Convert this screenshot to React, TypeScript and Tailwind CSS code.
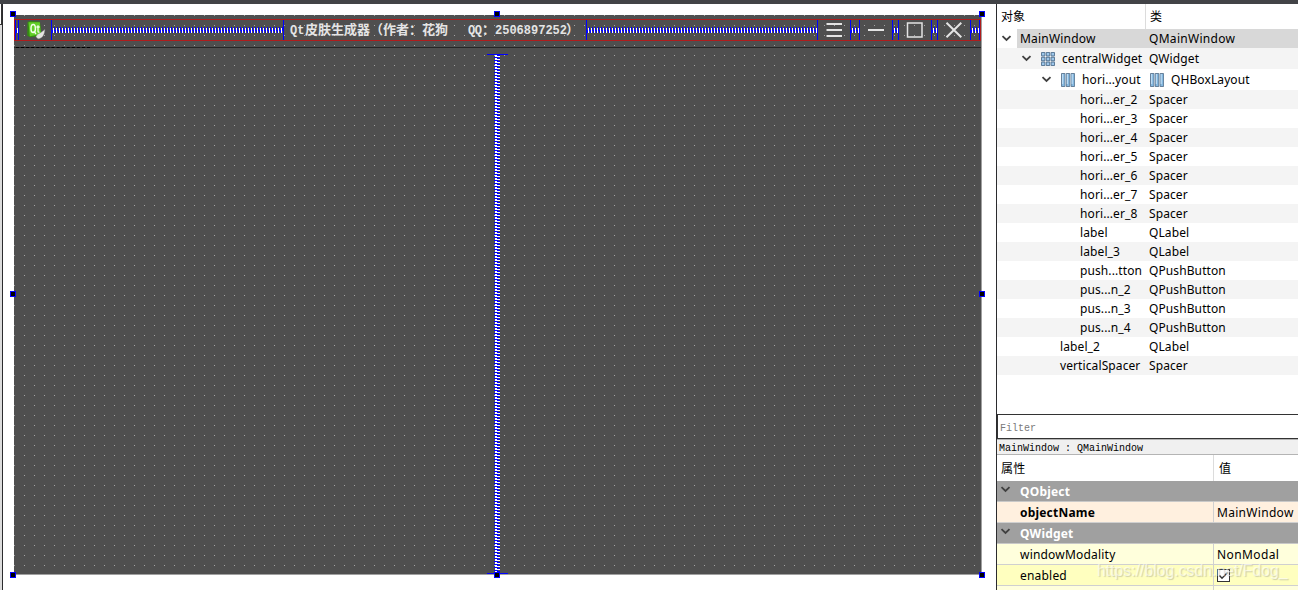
import { clsx } from 'clsx';

interface TreeRow {
  name: string;
  cls: string;
  pad: string;
  height: string;
  arrow?: boolean;
  icon?: 'grid' | 'hbox';
  selected?: boolean;
}

const LEAF = 'pl-[83px]';
const H = 'h-[19px]';

const treeRows: TreeRow[] = [
  { name: 'MainWindow', cls: 'QMainWindow', pad: 'pl-[3px]', height: H, arrow: true, selected: true },
  { name: 'centralWidget', cls: 'QWidget', pad: 'pl-[24px]', height: 'h-[21px]', arrow: true, icon: 'grid' },
  { name: 'hori...yout', cls: 'QHBoxLayout', pad: 'pl-[44px]', height: 'h-[21px]', arrow: true, icon: 'hbox' },
  { name: 'hori...er_2', cls: 'Spacer', pad: LEAF, height: H },
  { name: 'hori...er_3', cls: 'Spacer', pad: LEAF, height: H },
  { name: 'hori...er_4', cls: 'Spacer', pad: LEAF, height: H },
  { name: 'hori...er_5', cls: 'Spacer', pad: LEAF, height: H },
  { name: 'hori...er_6', cls: 'Spacer', pad: LEAF, height: H },
  { name: 'hori...er_7', cls: 'Spacer', pad: LEAF, height: H },
  { name: 'hori...er_8', cls: 'Spacer', pad: LEAF, height: H },
  { name: 'label', cls: 'QLabel', pad: LEAF, height: H },
  { name: 'label_3', cls: 'QLabel', pad: LEAF, height: H },
  { name: 'push...tton', cls: 'QPushButton', pad: LEAF, height: H },
  { name: 'pus...n_2', cls: 'QPushButton', pad: LEAF, height: H },
  { name: 'pus...n_3', cls: 'QPushButton', pad: LEAF, height: H },
  { name: 'pus...n_4', cls: 'QPushButton', pad: LEAF, height: H },
  { name: 'label_2', cls: 'QLabel', pad: 'pl-[63px]', height: H },
  { name: 'verticalSpacer', cls: 'Spacer', pad: 'pl-[63px]', height: H },
];

function Arrow({ className }: { className?: string }) {
  return (
    <svg className={clsx('h-[7px] w-[11px] shrink-0', className)} viewBox="0 0 11 7" fill="none">
      <path d="M1.5 1.2 L5.5 5 L9.5 1.2" stroke="#404040" strokeWidth="1.8" />
    </svg>
  );
}

function GridIcon() {
  return (
    <svg className="h-[14px] w-[14px] shrink-0" viewBox="0 0 14 14">
      {[0, 4.8, 9.6].map((y) =>
        [0, 4.8, 9.6].map((x) => (
          <g key={`${x}-${y}`}>
            <rect x={x} y={y} width="4.4" height="4.4" rx="0.8" fill="#5f7d9a" />
            <rect x={x + 1} y={y + 1} width="2.4" height="2.4" fill="#9cc6ea" />
          </g>
        ))
      )}
    </svg>
  );
}

function HBoxIcon() {
  return (
    <svg className="h-[14px] w-[14px] shrink-0" viewBox="0 0 14 14">
      {[0, 4.8, 9.6].map((x) => (
        <g key={x}>
          <rect x={x} y="0" width="4.4" height="14" rx="0.8" fill="#66809a" />
          <rect x={x + 1} y="1" width="2.5" height="12" fill="#84b8e0" />
          <rect x={x + 1} y="1" width="1.2" height="10" fill="#bcdaf2" />
        </g>
      ))}
    </svg>
  );
}

function HSpacer({ width, id }: { width: string; id: string }) {
  return (
    <div className={clsx('flex h-5 shrink-0 items-center border-x border-[#0000ff]', width)}>
      <svg className="h-[6px] w-full" shapeRendering="crispEdges">
        <defs>
          <pattern id={id} width="3" height="6" patternUnits="userSpaceOnUse">
            <path d="M1 1h1v5h-1z" fill="#fff" />
            <path d="M0 3h1v3h-1z M2 0h1v4h-1z" fill="#00f" />
          </pattern>
        </defs>
        <rect width="100%" height="6" fill={`url(#${id})`} />
      </svg>
    </div>
  );
}

function VSpacer() {
  return (
    <div className="flex h-[520px] w-[21px] border-y border-[#0000ff] pl-[7px]">
      <svg className="h-full w-[6px]" shapeRendering="crispEdges">
        <defs>
          <pattern id="vspring" width="6" height="3" patternUnits="userSpaceOnUse">
            <path d="M1 1h5v1h-5z" fill="#fff" />
            <path d="M0 2h4v1h-4z M3 0h3v1h-3z" fill="#00f" />
            <path d="M1 0h2v1h-2z" fill="#fff" />
          </pattern>
        </defs>
        <rect width="6" height="100%" fill="url(#vspring)" />
      </svg>
    </div>
  );
}

function QtLogo() {
  return (
    <div className="flex h-5 w-8 shrink-0 items-center justify-center pl-px">
      <svg className="h-5 w-5" viewBox="0 0 20 20">
        <path d="M1.5 2 L4 1 L14 1.8 L15.5 14.5 L13 16.2 L4 17.2 L1.2 15.5 Z" fill="#348b12" />
        <path d="M2.5 2.2 L13.8 2.3 L14.8 14.2 L3.8 16.3 Z" fill="#62cf27" />
        <ellipse cx="7.2" cy="8.6" rx="2.2" ry="4" fill="none" stroke="#f2ffe9" strokeWidth="1.5" />
        <path d="M7.8 11 L10 14 M12 5.2 V11.5 Q12 12.5 13.5 12 M10.4 7 H13.7" fill="none" stroke="#f2ffe9" strokeWidth="1.3" />
        <path d="M18.8 9.5 C18.5 14 17 18.5 12 18.8 L10 16.8 C11 13.5 15 13.5 18.8 9.5 Z" fill="#e6e6e2" stroke="#999" strokeWidth="0.4" />
      </svg>
    </div>
  );
}

function TitleButton({ path, square }: { path?: string; square?: boolean }) {
  return (
    <div className="flex h-5 w-8 shrink-0 items-center justify-center">
      <svg className="h-5 w-8" viewBox="0 0 32 20" fill="none">
        {square && <rect x="8.5" y="3" width="14.5" height="14" stroke="#e4e4e4" strokeWidth="1.5" />}
        {path && <path d={path} stroke="#e4e4e4" strokeWidth="2" />}
      </svg>
    </div>
  );
}

function Handle({ className }: { className: string }) {
  return <div className={clsx('absolute h-[6px] w-[6px] border border-[#0000ff] bg-black', className)} />;
}

function FormCanvas() {
  return (
    <div className="relative ml-[7px] mt-[7px] h-[567px] w-[975px] shrink-0 pl-1 pt-1">
      <div className="h-[560px] w-[968px] border-b border-r border-[#a0a0a0] bg-[#4f4f4f]">
        <div className="h-[559px] w-[967px] bg-[conic-gradient(from_90deg_at_1px_1px,transparent_50%,#a4a4a4_0_75%,transparent_0)] bg-[length:10px_10px] pt-1">
          <div className="flex h-[22px] items-center border border-[#b01c1c]">
            <HSpacer width="w-[4px]" id="s1" />
            <QtLogo />
            <HSpacer width="w-[233px]" id="s2" />
            <div className="flex h-5 w-[302px] shrink-0 items-center whitespace-pre pl-[6px] pt-px font-['Liberation_Mono','Noto_Sans_CJK_SC',monospace] text-[12px] font-bold text-[#e4e4e4]">
              <span className="w-[15px] shrink-0">Qt</span>
              <span className="w-[143px] shrink-0 text-[13px]">皮肤生成器（作者：花狗</span>
              <span className="w-[34px] shrink-0 pl-[20px] tracking-[-0.4px]">QQ</span>
              <span className="w-[13px] shrink-0 text-[13px]">：</span>
              <span className="w-[71px] shrink-0">2506897252</span>
              <span className="shrink-0 text-[13px]">）</span>
            </div>
            <HSpacer width="w-[232px]" id="s3" />
            <TitleButton path="M8.5 4 H24 M8.5 10 H24 M8.5 16 H24" />
            <HSpacer width="w-[10px]" id="s4" />
            <TitleButton path="M8 10 H24" />
            <HSpacer width="w-[7px]" id="s5" />
            <TitleButton square />
            <HSpacer width="w-[7px]" id="s6" />
            <TitleButton path="M8.5 2.8 L23.3 17.3 M23.3 2.8 L8.5 17.3" />
            <HSpacer width="w-[10px]" id="s7" />
          </div>
          <div className="mt-[6px] h-px bg-[#262626]">
            <div className="ml-[2px] h-px w-[74px] border-t border-dashed border-black" />
          </div>
          <div className="mt-[6px] pl-[473px]">
            <VSpacer />
          </div>
        </div>
      </div>
      <Handle className="left-0 top-0" />
      <Handle className="left-[484px] top-0" />
      <Handle className="left-[969px] top-0" />
      <Handle className="left-0 top-[280px]" />
      <Handle className="left-[969px] top-[280px]" />
      <Handle className="left-0 top-[561px]" />
      <Handle className="left-[484px] top-[561px]" />
      <Handle className="left-[969px] top-[561px]" />
    </div>
  );
}

function ObjectTree() {
  return (
    <div className="h-[410px] bg-white text-[12px] tracking-[0.1px]">
      <div className="flex h-[25px] items-center">
        <div className="flex h-full w-[149px] items-center border-r border-[#dcdcdc] pl-1">对象</div>
        <div className="pl-1">类</div>
      </div>
      {treeRows.map((row, i) => (
        <div
          key={row.name}
          className={clsx('flex items-center leading-none', row.height, row.selected ? 'bg-white' : i % 2 ? 'bg-[#f4f4f4]' : 'bg-white')}
        >
          {row.selected ? (
            <>
              <div className="w-5 pl-1">
                <Arrow />
              </div>
              <div className="flex h-full flex-1 items-center bg-[#d8d8d8]">
                <span className="w-[129px] pl-[3px] tracking-[0.2px]">{row.name}</span>
                <span className="pl-[3px] tracking-[0.3px]">{row.cls}</span>
              </div>
            </>
          ) : (
            <>
              <div className={clsx('flex h-full w-[149px] shrink-0 items-center', row.pad)}>
                {row.arrow && <Arrow className="mr-[9px]" />}
                {row.icon === 'grid' && <GridIcon />}
                {row.icon === 'hbox' && <HBoxIcon />}
                <span className={clsx('whitespace-nowrap', row.icon && 'ml-[7px]')}>{row.name}</span>
              </div>
              <div className="flex items-center pl-[3px]">
                {row.icon === 'hbox' && (
                  <span className="ml-px mr-[7px]">
                    <HBoxIcon />
                  </span>
                )}
                <span>{row.cls}</span>
              </div>
            </>
          )}
        </div>
      ))}
    </div>
  );
}

function Group({ name }: { name: string }) {
  return (
    <div className="flex h-[21px] items-center border-b border-[#c8c8c8] bg-[#a0a0a0] pl-[3px] font-bold text-white">
      <Arrow className="mb-1" />
      <span className="pl-[9px] pt-[2px]">{name}</span>
    </div>
  );
}

function PropertyEditor() {
  return (
    <div className="text-[12px] tracking-[0.2px]">
      <div className="flex h-[26px] items-center bg-white">
        <div className="flex h-full w-[217px] items-center border-r border-[#dcdcdc] pl-1 pt-[2px]">属性</div>
        <div className="pl-[5px] pt-[2px]">值</div>
      </div>
      <Group name="QObject" />
      <div className="flex h-[21px] items-center border-b border-[#d0d0d0] bg-[#fff0df]">
        <div className="flex h-full w-[217px] items-center border-r border-[#d0d0d0] pl-[23px] pt-[2px] font-bold">objectName</div>
        <div className="pl-[3px] pt-[2px] tracking-[0.3px]">MainWindow</div>
      </div>
      <Group name="QWidget" />
      <div className="flex h-[21px] items-center border-b border-[#d0d0d0] bg-[#ffffdc]">
        <div className="flex h-full w-[217px] items-center border-r border-[#d0d0d0] pl-[23px] pt-[2px]">windowModality</div>
        <div className="pl-[3px] pt-[2px] tracking-[0.4px]">NonModal</div>
      </div>
      <div className="flex h-[21px] items-center border-b border-[#d0d0d0] bg-[#ffffbf]">
        <div className="flex h-full w-[217px] items-center border-r border-[#d0d0d0] pl-[23px] pt-[2px]">enabled</div>
        <div className="pl-[3px]">
          <svg className="h-[13px] w-[13px]" viewBox="0 0 13 13" fill="none">
            <rect x="0.5" y="0.5" width="12" height="12" fill="#fff" stroke="#333" />
            <path d="M2.5 6.5 L5 9.2 L10.5 3.5" stroke="#333" strokeWidth="1.4" />
          </svg>
        </div>
      </div>
      <div className="h-[4px] bg-[#ffffdc] pl-[216px]">
        <div className="h-full w-px bg-[#d0d0d0]" />
      </div>
    </div>
  );
}

export default function App() {
  return (
    <div className="relative flex h-[590px] w-[1298px] flex-col overflow-hidden bg-white font-['Noto_Sans','Noto_Sans_CJK_SC',sans-serif] text-black">
      <div className="h-1 shrink-0 bg-[#424347]" />
      <div className="flex flex-1">
        <div className="w-[2px] shrink-0 bg-[#dcdcdc]">
          <div className="h-[21px] border-b border-r border-[#333] bg-white" />
        </div>
        <div className="w-px shrink-0 bg-[#2b2b2e]" />
        <FormCanvas />
        <div className="ml-[11px] w-[302px] shrink-0 border-l border-[#2b2b2e]">
          <ObjectTree />
          <div className="flex h-[25px] items-center border-y border-l border-[#333] pl-[2px] pt-[3px] font-['Liberation_Mono',monospace] text-[10px] text-[#7a7a7a]">
            Filter
          </div>
          <div className="flex h-4 items-center whitespace-pre border-b border-t border-[#b4b4b4] bg-[#f0f0f0] pl-[2px] pt-[2px] font-['Liberation_Mono',monospace] text-[10px]">
            MainWindow : QMainWindow
          </div>
          <PropertyEditor />
        </div>
      </div>
      <div className="absolute left-[1097px] top-[561px] whitespace-nowrap font-['Liberation_Sans',sans-serif] text-[15.8px] leading-5 text-white/60 [text-shadow:1px_1px_1px_rgba(120,120,120,0.35)]">
        https://blog.csdn.net/Fdog_
      </div>
    </div>
  );
}
